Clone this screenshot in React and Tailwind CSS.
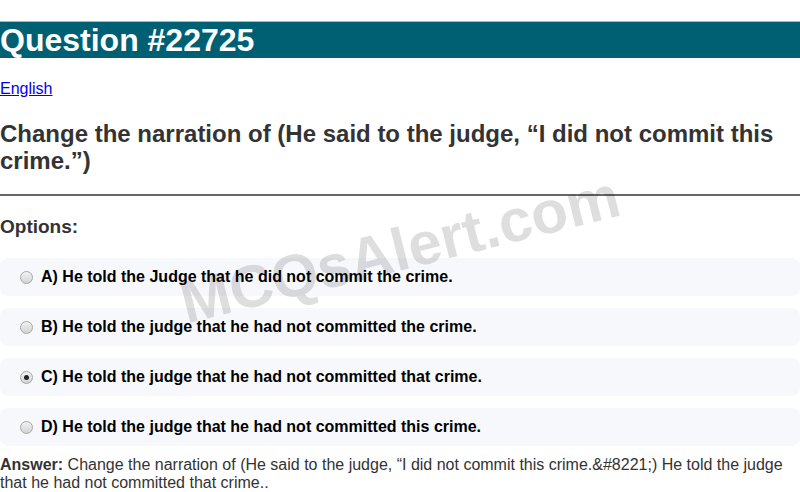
const options = [
  { key: "A", text: "He told the Judge that he did not commit the crime." },
  { key: "B", text: "He told the judge that he had not committed the crime." },
  { key: "C", text: "He told the judge that he had not committed that crime.", checked: true },
  { key: "D", text: "He told the judge that he had not committed this crime." },
];

function Radio({ checked }) {
  return (
    <span className="flex h-[13px] w-[13px] shrink-0 items-center justify-center rounded-full border border-[#a6a6a6] bg-gradient-to-b from-[#f2f2f2] to-[#d4d4d4]">
      {checked ? <span className="h-[5px] w-[5px] rounded-full bg-[#222]" /> : null}
    </span>
  );
}

export default function App() {
  return (
    <div className="relative min-h-[492px] overflow-hidden bg-white font-['Liberation_Sans',Arial,sans-serif] text-[#333]">
      <h1 className="mt-[21px] mb-[21px] border-t border-[#9fbcc4] bg-[#006073] text-[32px] leading-[36px] font-bold text-white">
        Question #22725
      </h1>
      <div className="text-[16px] leading-[20px]">
        <a href="#" className="text-[#0000ee] underline">
          English
        </a>
      </div>
      <h2 className="mt-[21px] text-[24px] leading-[27px] font-bold">
        Change the narration of (He said to the judge, “I did not commit this crime.”)
      </h2>
      <hr className="mt-[20px] border-t-2 border-[#666]" />
      <h3 className="mt-[20px] text-[19px] leading-[22px] font-bold">Options:</h3>
      <div className="mt-[20px] flex flex-col gap-[12px]">
        {options.map((o) => (
          <div key={o.key} className="flex h-[38px] items-center gap-[8px] rounded-lg bg-[#f7f8fc] pl-[20px]">
            <Radio checked={o.checked} />
            <span className="text-[16px] font-bold text-black">
              {o.key}) {o.text}
            </span>
          </div>
        ))}
      </div>
      <p className="mt-[10px] text-[16px] leading-[18px]">
        <b>Answer:</b> Change the narration of (He said to the judge, “I did not commit this crime.&amp;#8221;) He told the judge that he had not committed that crime..
      </p>
      <div className="pointer-events-none absolute left-[400px] top-[250px] -translate-x-1/2 -translate-y-1/2 -rotate-[14deg] text-[60px] font-bold whitespace-nowrap text-black/[0.13]">
        MCQsAlert.com
      </div>
    </div>
  );
}
